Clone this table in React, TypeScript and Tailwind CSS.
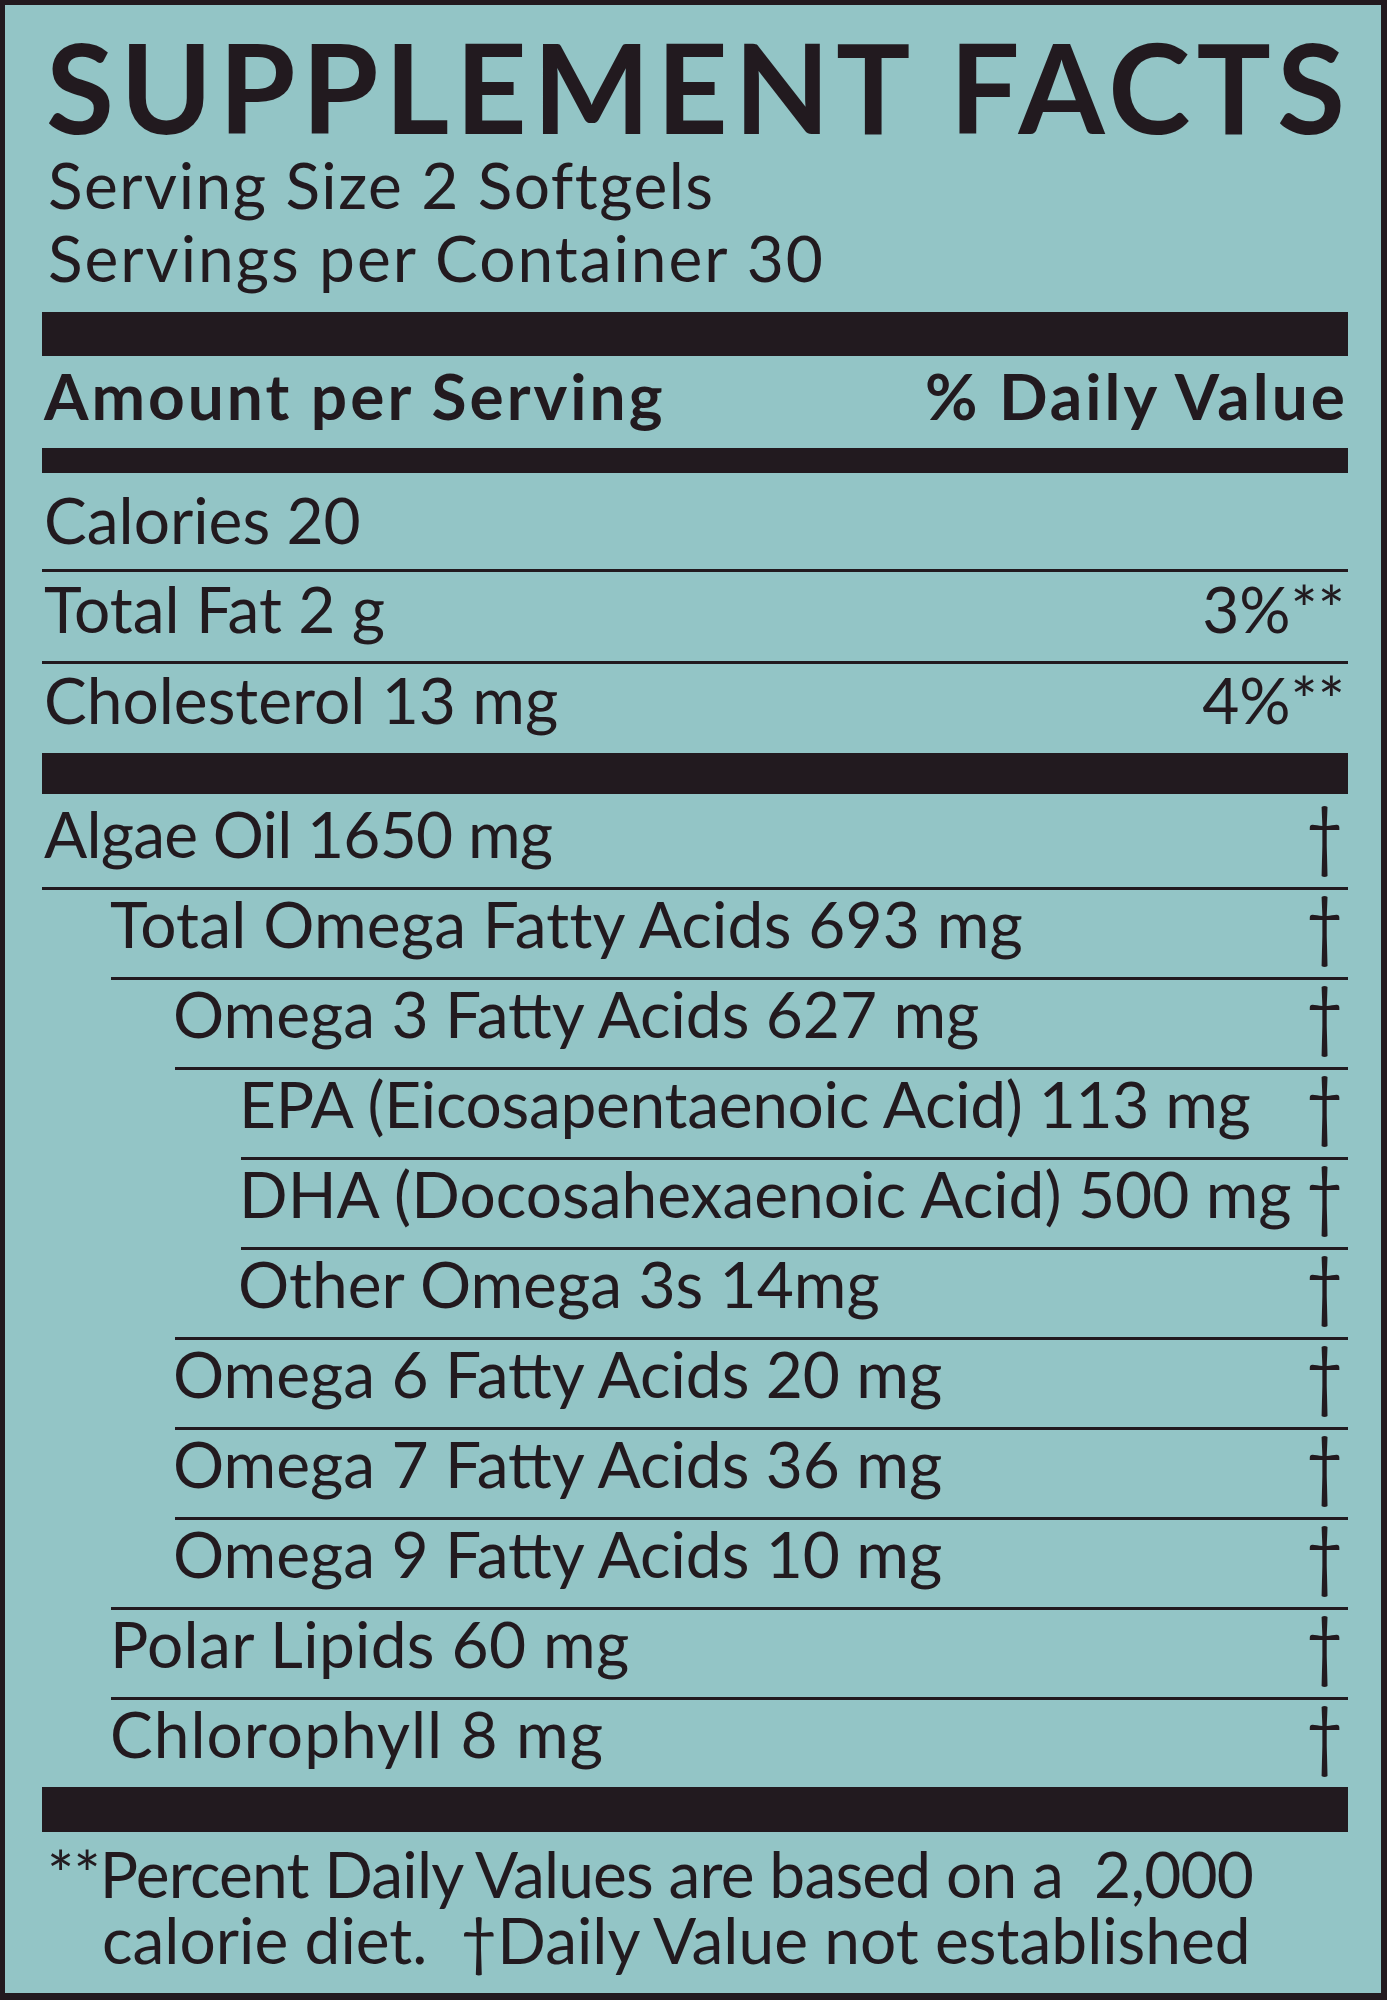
import React from 'react';

type Item = { label: string; text: string; line: string; last?: boolean };

const items: Item[] = [
  { label: 'Algae Oil 1650 mg', text: 'pl-[2px] tracking-[-0.8px]', line: 'ml-0' },
  { label: 'Total Omega Fatty Acids 693 mg', text: 'pl-[68px] tracking-[0.2px]', line: 'ml-[69px]' },
  { label: 'Omega 3 Fatty Acids 627 mg', text: 'pl-[131px]', line: 'ml-[133px]' },
  { label: 'EPA (Eicosapentaenoic Acid) 113 mg', text: 'pl-[197px] tracking-[-0.3px]', line: 'ml-[199px]' },
  { label: 'DHA (Docosahexaenoic Acid) 500 mg', text: 'pl-[197px]', line: 'ml-[199px]' },
  { label: 'Other Omega 3s 14mg', text: 'pl-[196px]', line: 'ml-[133px]' },
  { label: 'Omega 6 Fatty Acids 20 mg', text: 'pl-[131px]', line: 'ml-[133px]' },
  { label: 'Omega 7 Fatty Acids 36 mg', text: 'pl-[131px]', line: 'ml-[133px]' },
  { label: 'Omega 9 Fatty Acids 10 mg', text: 'pl-[131px]', line: 'ml-[69px]' },
  { label: 'Polar Lipids 60 mg', text: 'pl-[68px] tracking-[0.3px]', line: 'ml-[69px]' },
  { label: 'Chlorophyll 8 mg', text: 'pl-[68px] tracking-[1px]', line: 'ml-[69px]', last: true },
];

function Dagger() {
  return (
    <span className="inline-block pr-[5px] tracking-normal text-[64px] leading-[64px] scale-y-[1.22] origin-center">†</span>
  );
}

export default function App() {
  return (
    <div className="box-border w-[1387px] h-[2000px] bg-[#93c5c6] border-solid border-[#221a1f] border-t-[5px] border-l-[5px] border-r-[6px] border-b-[7px] pl-[37px] pr-[33px] text-[#221a1f] font-['Lato',sans-serif] overflow-hidden">
      <div className="pt-[19px] pl-[4px] text-[124px] leading-[124px] font-bold tracking-[6.3px] whitespace-nowrap">
        SUPPLEMENT FACTS
      </div>
      <div className="pl-[6px] text-[64px] leading-[73px] whitespace-nowrap">
        <div className="tracking-[1.5px]">Serving Size 2 Softgels</div>
        <div className="tracking-[2px]">Servings per Container 30</div>
      </div>
      <div className="mt-[18px] h-[44px] bg-[#221a1f]" />
      <div className="h-[92px] flex items-end justify-between pb-[20px] pl-[2px] pr-[0px] text-[64px] leading-[64px] font-bold tracking-[3px] whitespace-nowrap">
        <span>Amount per Serving</span>
        <span>% Daily Value</span>
      </div>
      <div className="h-[25px] bg-[#221a1f]" />
      <div className="h-[96px] flex items-end justify-between pb-[17px] pl-[2px] pr-[3px] text-[64px] leading-[64px] whitespace-nowrap">
        <span>Calories 20</span>
      </div>
      <div className="h-[3px] bg-[#221a1f]" />
      <div className="h-[89px] flex items-end justify-between pb-[20px] pl-[2px] pr-[3px] text-[64px] leading-[64px] whitespace-nowrap">
        <span>Total Fat 2 g</span>
        <span>3%**</span>
      </div>
      <div className="h-[3px] bg-[#221a1f]" />
      <div className="h-[89px] flex items-end justify-between pb-[21px] pl-[2px] pr-[3px] text-[64px] leading-[64px] whitespace-nowrap">
        <span>Cholesterol 13 mg</span>
        <span>4%**</span>
      </div>
      <div className="h-[41px] bg-[#221a1f]" />
      {items.map((it, i) => (
        <div key={it.label}>
          <div
            className={`${i === 0 ? 'h-[93px]' : 'h-[87px]'} flex items-end justify-between pb-[21px] ${it.text} text-[64px] leading-[64px] whitespace-nowrap`}
          >
            <span>{it.label}</span>
            <Dagger />
          </div>
          {!it.last && <div className={`h-[3px] bg-[#221a1f] ${it.line}`} />}
        </div>
      ))}
      <div className="h-[45px] bg-[#221a1f]" />
      <div className="pt-[9px] text-[64px] leading-[66px] whitespace-pre">
        <div className="pl-[5px] tracking-[-0.8px]">**Percent Daily Values are based on a  2,000</div>
        <div className="pl-[60px]">calorie diet.  †Daily Value not established</div>
      </div>
    </div>
  );
}
